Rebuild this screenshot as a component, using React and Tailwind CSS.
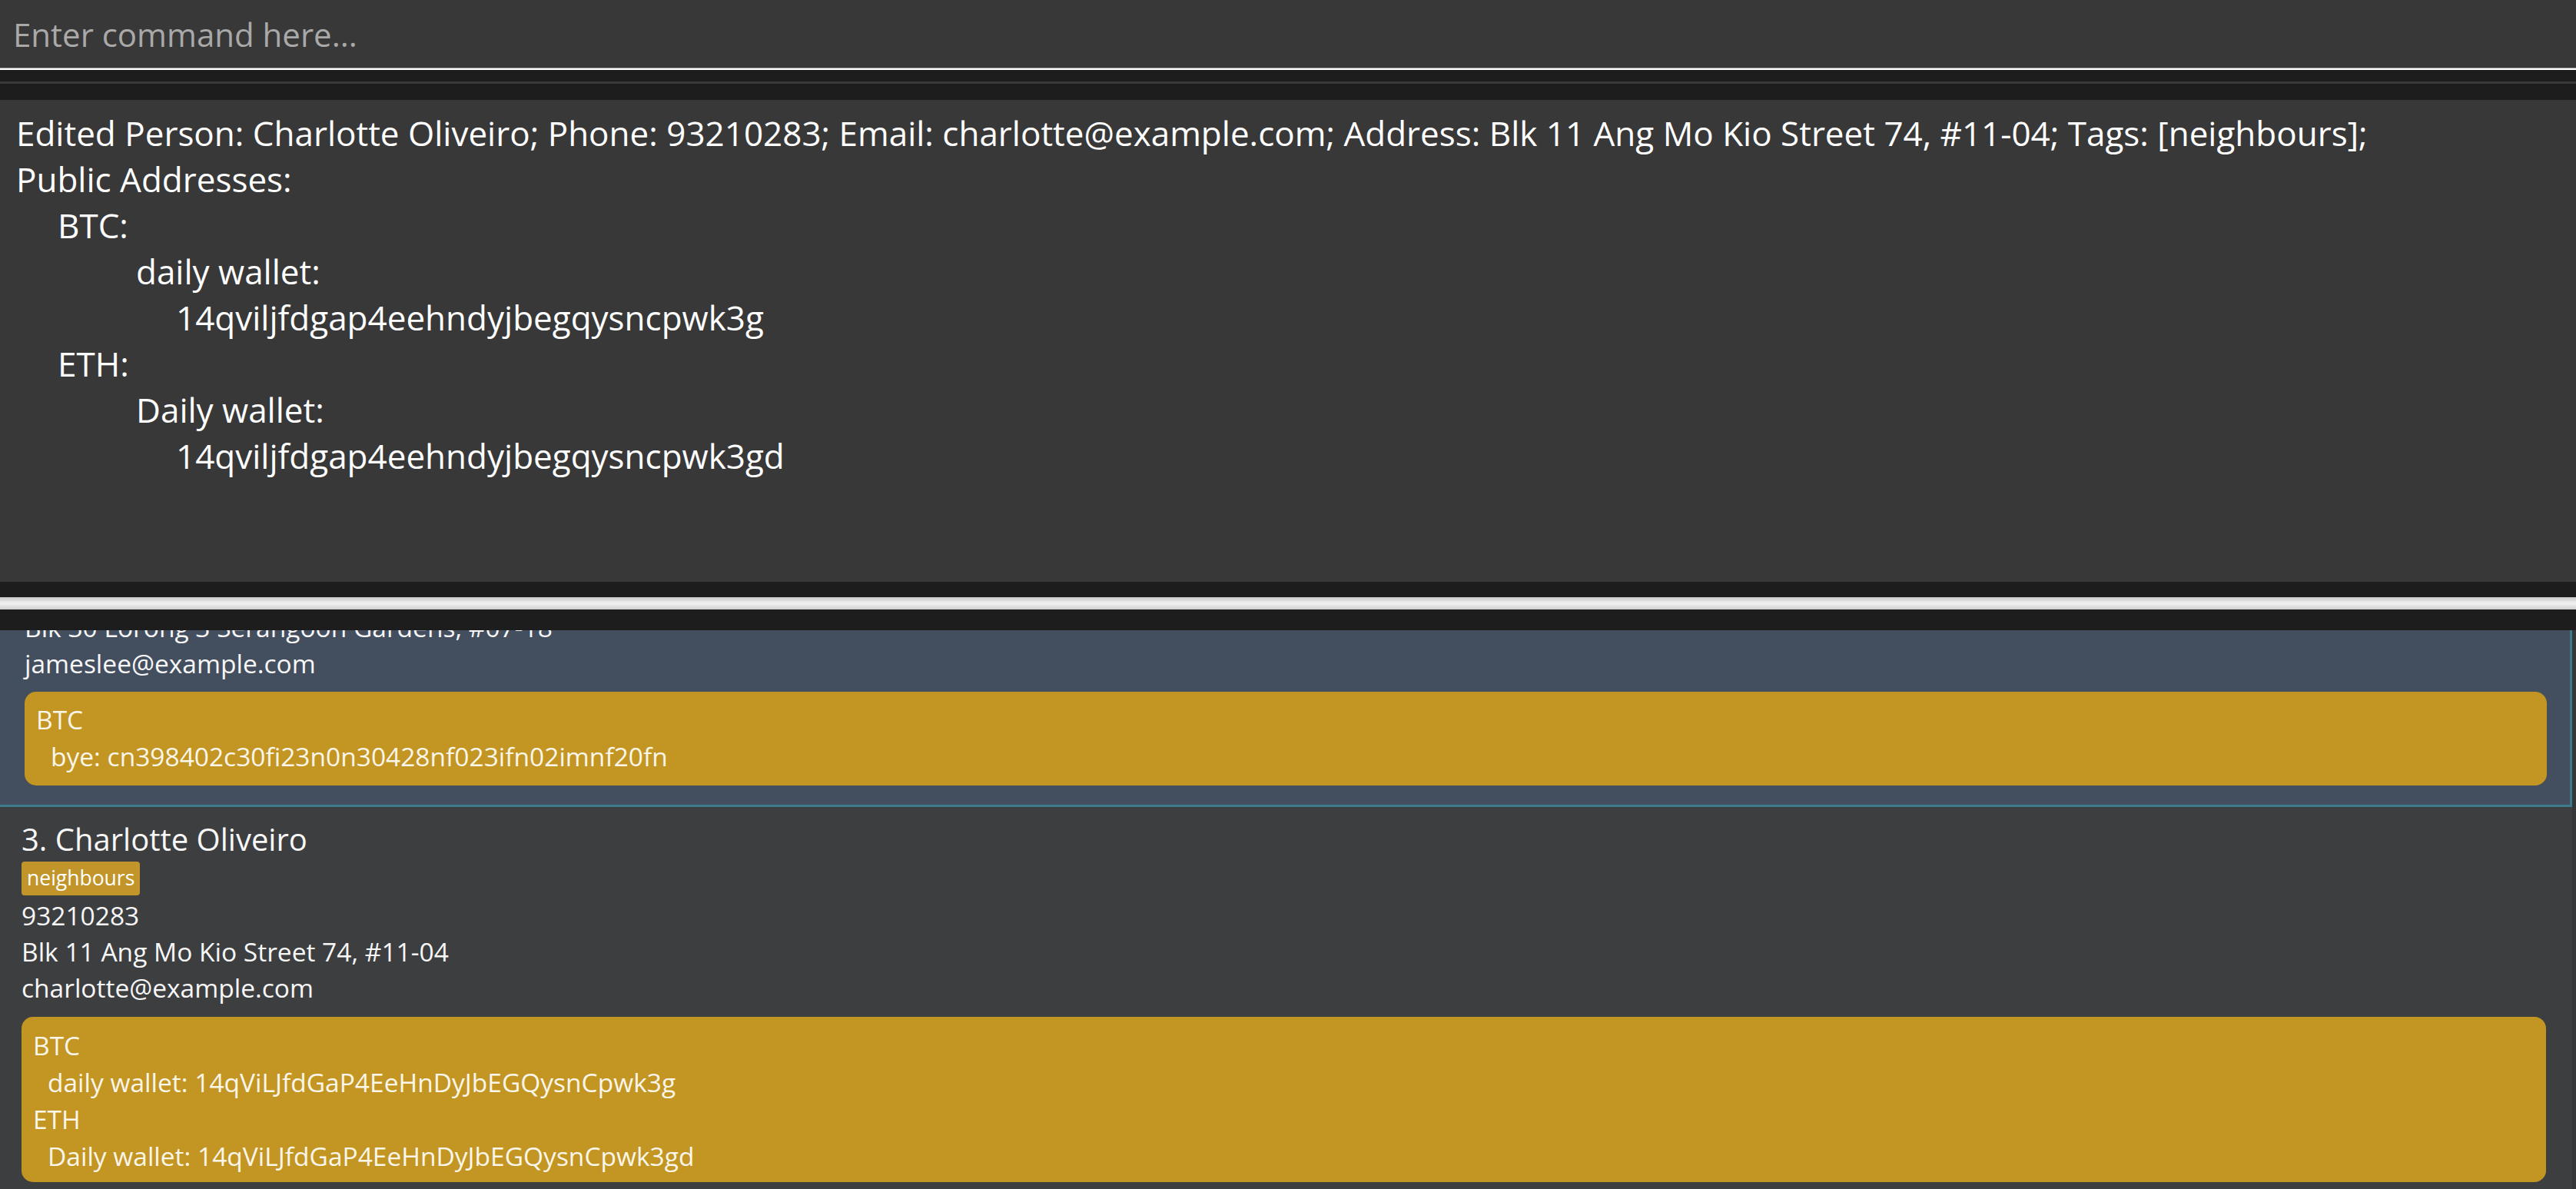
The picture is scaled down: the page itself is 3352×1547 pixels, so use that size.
import React from 'react';

const font = "font-['Open_Sans',sans-serif]";

const resultLines = [
    { indent: 'pl-0', text: 'Edited Person: Charlotte Oliveiro; Phone: 93210283; Email: charlotte@example.com; Address: Blk 11 Ang Mo Kio Street 74, #11-04; Tags: [neighbours];' },
    { indent: 'pl-0', text: 'Public Addresses:' },
    { indent: 'pl-[54px]', text: 'BTC:' },
    { indent: 'pl-[156px]', text: 'daily wallet:' },
    { indent: 'pl-[208px]', text: '14qviljfdgap4eehndyjbegqysncpwk3g' },
    { indent: 'pl-[54px]', text: 'ETH:' },
    { indent: 'pl-[156px]', text: 'Daily wallet:' },
    { indent: 'pl-[208px]', text: '14qviljfdgap4eehndyjbegqysncpwk3gd' },
];

const WalletBox = ({ groups, className }) => (
    <div className={`bg-[#c39523] rounded-[15px] text-[33.5px] leading-[48px] text-[#fbf6ea] pl-[15px] ${className}`}>
        {groups.map((g) => (
            <div key={g.chain}>
                <div>{g.chain}</div>
                {g.wallets.map((w) => (
                    <div key={w} className="pl-[19px]">{w}</div>
                ))}
            </div>
        ))}
    </div>
);

export default function App() {
    return (
        <div className={`${font} w-[3352px] h-[1547px] flex flex-col bg-[#383838] overflow-hidden`}>
            {/* Command box */}
            <div className="h-[88px] shrink-0 bg-[#383838] px-[17px] flex items-center text-[42px] text-[#a9a9a9]">
                Enter command here...
            </div>
            <div className="h-[1px] shrink-0 bg-[#9a9a9a]" />
            <div className="h-[2px] shrink-0 bg-white" />
            <div className="h-[15px] shrink-0 bg-[#1d1d1d]" />
            <div className="h-[3px] shrink-0 bg-[#393939]" />
            <div className="h-[21px] shrink-0 bg-[#1d1d1d]" />

            {/* Result display */}
            <div className="h-[627px] shrink-0 bg-[#383838] px-[21px] pt-[13px] text-[44px] leading-[60px] text-white whitespace-nowrap">
                {resultLines.map((l, i) => (
                    <div key={i} className={l.indent}>{l.text}</div>
                ))}
            </div>

            {/* Splitter */}
            <div className="h-[20px] shrink-0 bg-[#1d1d1d]" />
            <div className="h-[16px] shrink-0 bg-gradient-to-b from-[#c8c8c8] via-[#f2f2f2] to-[#cfcfcf]" />
            <div className="h-[27px] shrink-0 bg-[#1d1d1d]" />

            {/* Person list */}
            <div className="flex-1 flex overflow-hidden">
                <div className="flex-1 overflow-hidden bg-[#3d3e40] text-[#f7f7f7]">
                    {/* Card 2 (selected, scrolled partly out of view) */}
                    <div className="-mt-[27px] bg-[#434e5f] border-r-[3px] border-b-[3px] border-[#3d7b8b] pl-[32px] pr-[30px] pb-[25px] text-[33.5px] leading-[47px]">
                        <div>Blk 30 Lorong 3 Serangoon Gardens, #07-18</div>
                        <div>jameslee@example.com</div>
                        <WalletBox
                            className="mt-[13px] pt-[12px] pb-[14px] pl-[13px]"
                            groups={[{ chain: 'BTC', wallets: ['bye: cn398402c30fi23n0n30428nf023ifn02imnf20fn'] }]}
                        />
                    </div>

                    {/* Card 3 */}
                    <div className="pl-[28px] pr-[34px] pt-[17px] pb-[8px]">
                        <div className="text-[40px] leading-[50px]">3. Charlotte Oliveiro</div>
                        <div className="mt-[4px] flex">
                            <span className="h-[44px] px-[7px] flex items-center rounded-[4px] bg-[#c2952a] text-[26.5px] text-white">neighbours</span>
                        </div>
                        <div className="mt-[3px] text-[33.5px] leading-[47px]">
                            <div>93210283</div>
                            <div>Blk 11 Ang Mo Kio Street 74, #11-04</div>
                            <div>charlotte@example.com</div>
                        </div>
                        <WalletBox
                            className="mt-[14px] pt-[13px] pb-[10px]"
                            groups={[
                                { chain: 'BTC', wallets: ['daily wallet: 14qViLJfdGaP4EeHnDyJbEGQysnCpwk3g'] },
                                { chain: 'ETH', wallets: ['Daily wallet: 14qViLJfdGaP4EeHnDyJbEGQysnCpwk3gd'] },
                            ]}
                        />
                    </div>
                </div>
                <div className="w-[5px] bg-[#363738]" />
            </div>
        </div>
    );
}
